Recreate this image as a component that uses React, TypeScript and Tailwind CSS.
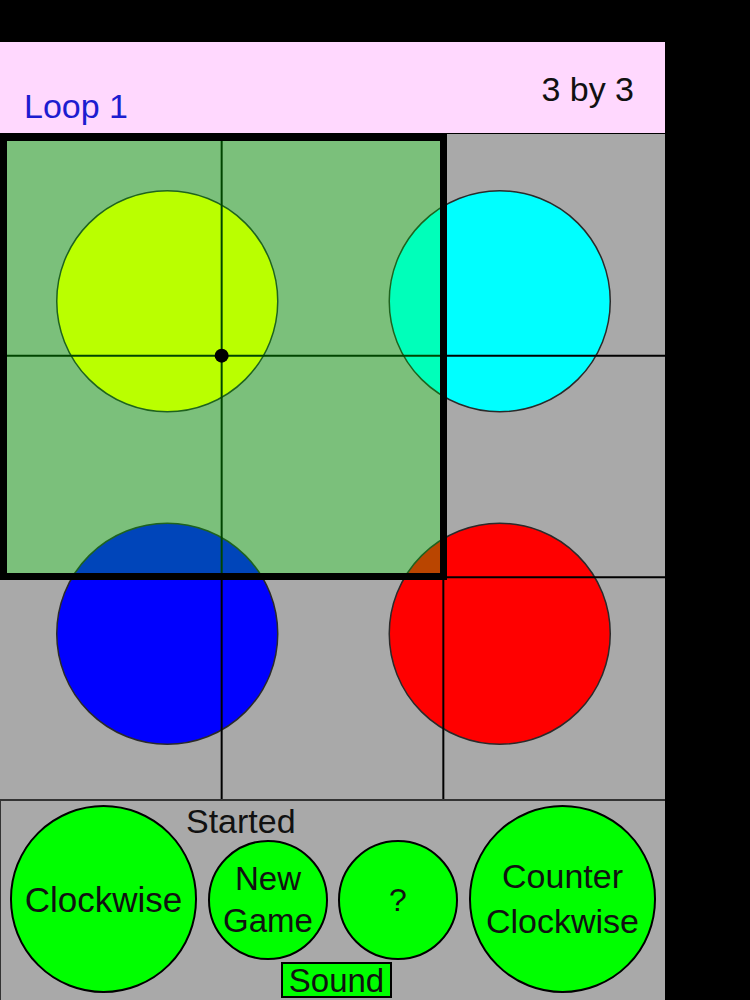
import React from 'react';

const FONT = { fontFamily: '"Liberation Sans", Arial, sans-serif' };

const BOARD = 665;
const THIRD = BOARD / 3;

const DISCS = [
  { cx: BOARD * 0.25, cy: BOARD * 0.25, fill: '#ffff00' },
  { cx: BOARD * 0.75, cy: BOARD * 0.25, fill: '#00ffff' },
  { cx: BOARD * 0.25, cy: BOARD * 0.75, fill: '#0000ff' },
  { cx: BOARD * 0.75, cy: BOARD * 0.75, fill: '#ff0000' },
];

function Board() {
  return (
    <div className="relative w-[665px] h-[665px] bg-[#a9a9a9] mt-px">
      <svg className="absolute inset-0" width={BOARD} height={BOARD} viewBox={`0 0 ${BOARD} ${BOARD}`}>
        {/* discs */}
        {DISCS.map((d, i) => (
          <circle key={i} cx={d.cx + 1} cy={d.cy + 1} r={110.5} fill={d.fill} stroke="#2a2a2a" strokeWidth={1.5} />
        ))}
        {/* grid lines sit over the discs */}
        {[THIRD, THIRD * 2].map(v => (
          <g key={v}>
            <line x1={v} y1={0} x2={v} y2={BOARD} stroke="#000" strokeWidth={2} />
            <line x1={0} y1={v} x2={BOARD} y2={v} stroke="#000" strokeWidth={2} />
          </g>
        ))}
        {/* selection overlay */}
        <rect x={0} y={0} width={THIRD * 2} height={THIRD * 2} fill="rgba(0,255,0,0.27)" />
        <rect x={3.5} y={3.5} width={440} height={439} fill="none" stroke="#000" strokeWidth={7} />
        <circle cx={THIRD} cy={THIRD} r={7} fill="#000" />
      </svg>
    </div>
  );
}

export default function App() {
  return (
    <div className="w-[750px] h-[1000px] bg-black pt-[42px] overflow-hidden" style={FONT}>
      <div className="w-[665px]">
        {/* header */}
        <div className="h-[91px] bg-[#ffd8fe] flex justify-between items-start px-[24px]">
          <span className="self-end pb-[10px] text-[34px] leading-none text-[#1c1cd0]">Loop 1</span>
          <span className="pt-[30px] pr-[7px] text-[34px] leading-none text-[#111]">3 by 3</span>
        </div>

        <Board />

        {/* controls */}
        <div className="h-[201px] bg-[#a9a9a9] border-t-2 border-l border-[#333] flex items-start pl-[9px]">
          <button className="mt-[4px] w-[187px] h-[188px] rounded-full bg-[#00ff00] border-2 border-black text-[35px] leading-none text-[#111] flex items-center justify-center">
            Clockwise
          </button>

          <div className="ml-[11px] w-[250px] flex flex-col pt-[3px]">
            <span className="-ml-[22px] h-[34px] text-[34px] leading-none text-[#111]">Started</span>
            <div className="mt-[2px] flex gap-[10px]">
              <button className="w-[120px] h-[120px] rounded-full bg-[#00ff00] border-2 border-black text-[33px] leading-[42px] text-[#111] flex flex-col items-center justify-center">
                <span>New</span>
                <span>Game</span>
              </button>
              <button className="w-[120px] h-[120px] rounded-full bg-[#00ff00] border-2 border-black text-[32px] leading-none text-[#111] flex items-center justify-center">
                ?
              </button>
            </div>
            <button className="mt-[2px] ml-[73px] w-[111px] h-[36px] bg-[#00ff00] border-2 border-black text-[33px] leading-none text-[#111] flex items-center justify-center">
              Sound
            </button>
          </div>

          <button className="ml-[11px] mt-[4px] w-[187px] h-[188px] rounded-full bg-[#00ff00] border-2 border-black text-[34px] leading-[45px] text-[#111] flex flex-col items-center justify-center">
            <span>Counter</span>
            <span>Clockwise</span>
          </button>
        </div>
      </div>
    </div>
  );
}
